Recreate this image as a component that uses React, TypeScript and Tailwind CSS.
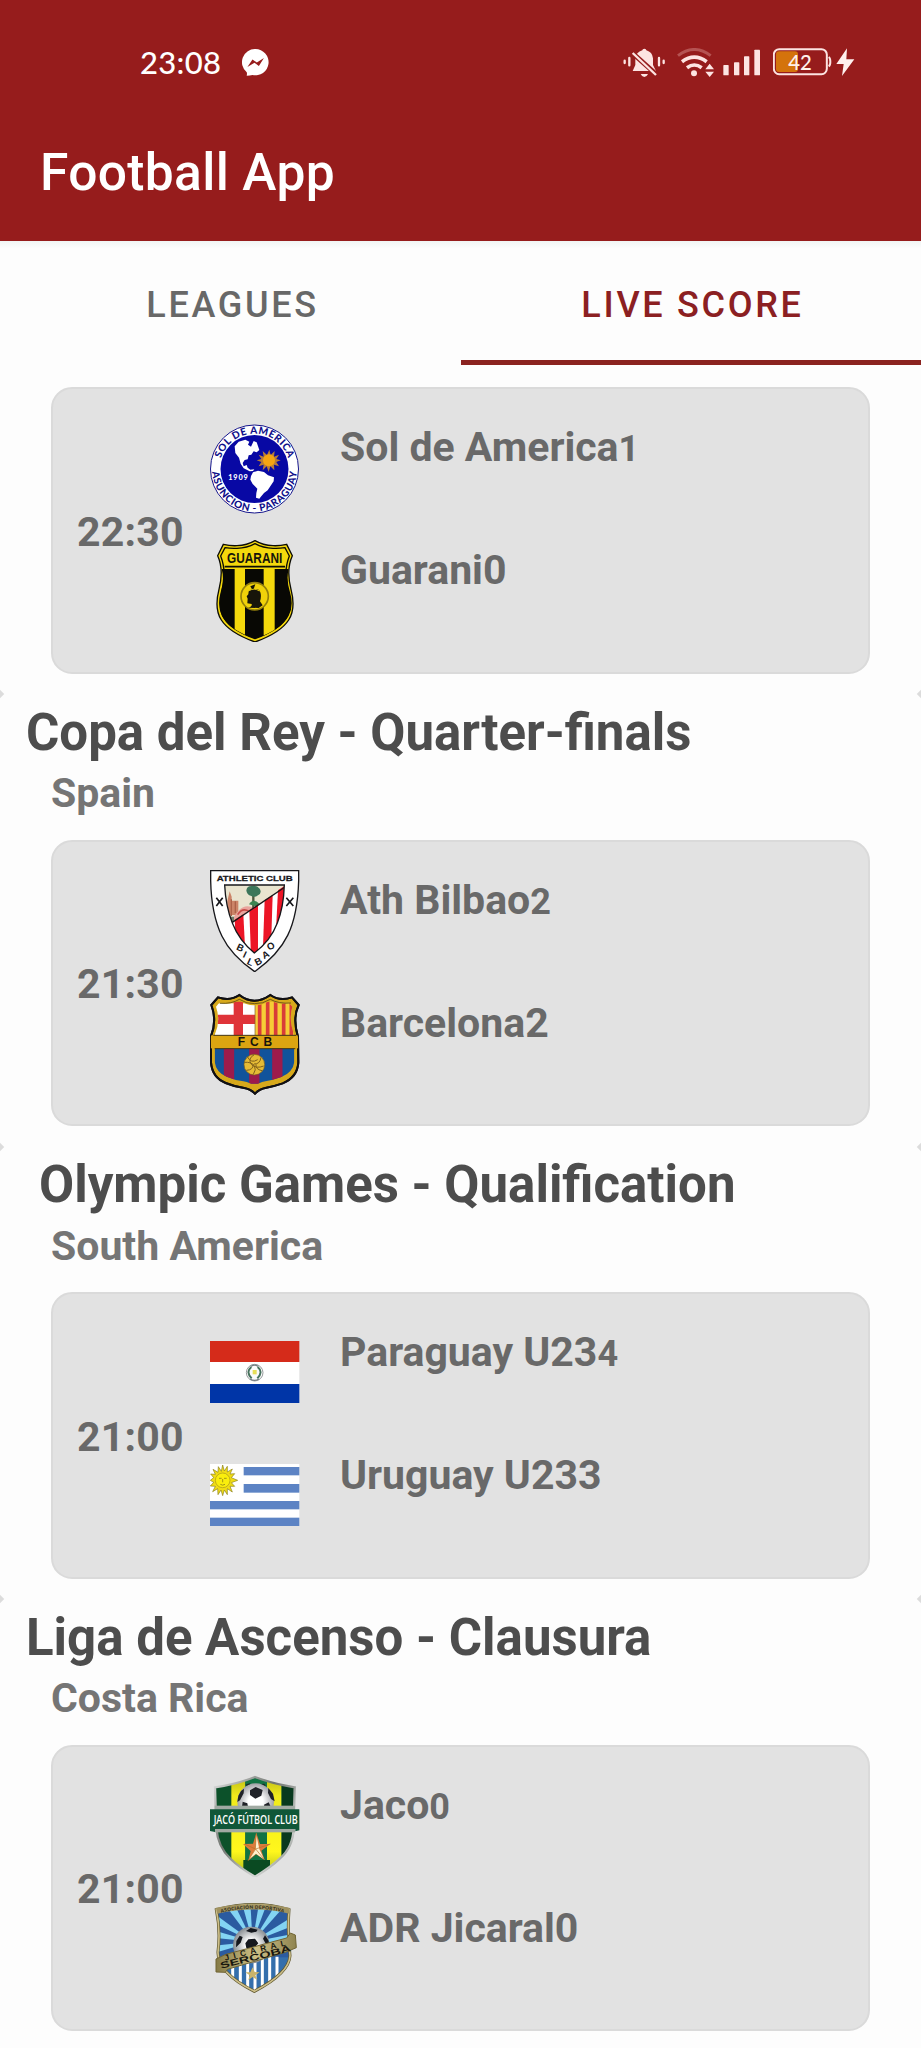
import type { ReactNode } from "react";

/* ---------- status bar icons ---------- */

function MessengerIcon() {
  return (
    <svg className="h-[27px] w-[27px]" viewBox="728 147 80 80">
      <path d="M768 147a39 39 0 1 1-9 77c-5 1-11 2-17 2 1-4 1-7 0-10a39 39 0 0 1 26-69z" fill="#fff" />
      <path d="M744 200l15-22 13 9 21-13-15 23-13-9z" fill="#961c1c" />
    </svg>
  );
}

function MutedBellIcon() {
  return (
    <svg className="h-[29px] w-[43px]" viewBox="68 49 129 87" fill="#fde4e2">
      <path d="M126 56q0-5 6-5t6 5q18 5 20 24v20l9 18H97l8-18V80q2-18 21-24z" />
      <path d="M121 127h22q-4 9-11 9t-11-9z" />
      <path d="M94 62l76 68" stroke="#961c1c" strokeWidth="15" />
      <path d="M97 64l70 66" stroke="#fde4e2" strokeWidth="7" />
      <path d="M73 87v7M87 79v22M176 79v22M190 87v7" stroke="#fde4e2" strokeWidth="7" strokeLinecap="round" />
    </svg>
  );
}

function WifiIcon() {
  return (
    <svg className="h-[29px] w-[38px]" viewBox="230 50 114 87" fill="none">
      <path d="M233 73q49-37 98 0" stroke="#b55352" strokeWidth="9" />
      <path d="M245 91q37-27 74 0" stroke="#fde4e2" strokeWidth="11" />
      <path d="M260 109q22-16 44 0" stroke="#fde4e2" strokeWidth="11" />
      <circle cx="281" cy="126" r="9" fill="#fde4e2" />
      <path d="M315 114l13-17 13 17zM315 121h26l-13 16z" fill="#fde4e2" />
    </svg>
  );
}

function SignalIcon() {
  return (
    <svg className="h-[27px] w-[37px]" viewBox="369 54 111 81" fill="#fde4e2">
      <rect x="370" y="102" width="16" height="31" rx="2" />
      <rect x="402" y="94" width="16" height="39" rx="2" />
      <rect x="432" y="76" width="16" height="57" rx="2" />
      <rect x="463" y="56" width="17" height="77" rx="2" />
    </svg>
  );
}

function BatteryIcon() {
  return (
    <svg className="h-[28px] w-[59px]" viewBox="519 54 177 84">
      <rect x="528" y="64" width="66" height="62" rx="9" fill="#d4730c" />
      <rect x="521.500" y="57.500" width="159" height="75" rx="16" fill="none" stroke="#fde4e2" strokeWidth="6" />
      <path d="M686 81q5 3 5 14t-5 14" fill="none" stroke="#fde4e2" strokeWidth="6" />
      <text x="600" y="119" textAnchor="middle" fontFamily="Lato, sans-serif" fontSize="61" fontWeight="500" fill="#fff0ec">
        42
      </text>
    </svg>
  );
}

function BoltIcon() {
  return (
    <svg className="h-[28px] w-[19px]" viewBox="708 52 57 84">
      <path d="M741 53l-32 47h22l-5 36 37-50h-24z" fill="#fff0ee" />
    </svg>
  );
}

/* ---------- club crests and flags ---------- */

const crest = "block h-[102px] w-[90px] shrink-0";

function SolDeAmerica() {
  return (
    <svg className={crest} viewBox="60 24 270 306">
      <defs>
        <path id="sol-top" d="M87.500 180A106 106 0 0 1 299.500 180" />
        <path id="sol-bottom" d="M66 180A127.500 127.500 0 0 0 321 180" />
      </defs>
      <circle cx="193.500" cy="180" r="132" fill="#fff" stroke="#15158c" strokeWidth="3" />
      <circle cx="193.500" cy="180" r="102" fill="#0808a4" />
      <g fontFamily="Lato, sans-serif" fontWeight="900" fill="#10108a" fontSize="30" textAnchor="middle">
        <text textLength="268" lengthAdjust="spacing">
          <textPath href="#sol-top" startOffset="50%">SOL DE AMERICA</textPath>
        </text>
        <text textLength="384" lengthAdjust="spacing">
          <textPath href="#sol-bottom" startOffset="50%">ASUNCION - PARAGUAY</textPath>
        </text>
      </g>
      <path
        d="M134 112l12-14 20-6 12 6-4 9 9 6 8-17 9 4 8 23-8 7-9-3-7 10-8 2-3 12-9 2-6 9 3 10 9-4 3 8 8 6 12-1-4 5-10 1-18-9-9-14-5-18-11-14z"
        fill="#fff"
      />
      <path d="M189 190l15-5 18 4 12 10 18 6-1 12-9 13-9 14-11 8-10 12-4 5-10-3 1-14 3-13-14-14-7-13 2-11z" fill="#fff" />
      <path
        d="M238 122l4 16 12-12-2 17 15-6-8 13 13 4-13 5 8 13-15-5 1 17-12-12-5 17-6-17-12 12 3-17-15 5 8-13-14-5 14-4-8-13 15 6-3-17 13 12z"
        fill="#b87c38"
      />
      <circle cx="237" cy="154" r="18" fill="#f6a412" />
      <text x="144" y="214" textAnchor="middle" textLength="58" fontFamily="Lato, sans-serif" fontWeight="900" fontSize="22" fill="#fff">
        1909
      </text>
    </svg>
  );
}

function Guarani() {
  return (
    <svg className={crest} viewBox="60 393 270 306">
      <defs>
        <clipPath id="guarani-body">
          <path d="M95 480H296q-8 32 4 70 12 40-4 70-22 42-101 69-77-27-99-69-15-30-4-70 12-38 3-70z" />
        </clipPath>
      </defs>
      <path
        d="M195 395q24 14 54 15 20 1 41-4l17 34q-19 42-4 101 15 58-7 92-24 38-101 66-77-28-101-66-22-34-7-92 15-59-4-101l17-34q21 5 41 4 30-1 54-15z"
        fill="#f4d80c" stroke="#0c0c05" strokeWidth="4"
      />
      <path
        d="M195 404q24 13 54 14 18 1 36-2l13 25q-18 46-5 100 15 57-6 88-22 35-92 60-70-25-92-60-21-31-6-88 13-54-5-100l13-25q18 3 36 2 30-1 54-14z"
        fill="#f4d80c" stroke="#0c0c05" strokeWidth="4"
      />
      <g clipPath="url(#guarani-body)">
        <rect x="80" y="478" width="230" height="220" fill="#080804" />
        <rect x="134" y="478" width="31" height="220" fill="#f4d80c" />
        <rect x="221" y="478" width="33" height="220" fill="#f4d80c" />
      </g>
      <path d="M104 473H285" stroke="#0c0c05" strokeWidth="5" />
      <circle cx="194" cy="562" r="41" fill="#f0d20a" stroke="#94800c" strokeWidth="5" />
      <path d="M174 596q13-3 11-11l-13-2 1-14-3-7 5-6 1-9 10-6-5-9 15-6-5 14q17-2 20 10 4 12-1 27l8 12-12 8z" fill="#17150a" />
      <path d="M175 546q18-11 33 0" stroke="#d7be11" strokeWidth="3" fill="none" />
      <text x="194" y="462" textAnchor="middle" textLength="166" lengthAdjust="spacingAndGlyphs" fontFamily="Liberation Sans, sans-serif" fontWeight="700" fontSize="43" fill="#17150a">
        GUARANI
      </text>
    </svg>
  );
}

function AthleticClub() {
  return (
    <svg className={crest} viewBox="60 30 270 306">
      <defs>
        <clipPath id="athletic-shield">
          <path d="M104 75H283q-2 66-21 114-20 53-69 90-46-38-66-90-20-50-23-114z" />
        </clipPath>
      </defs>
      <path d="M62 32H326v30q-3 103-33 164-28 58-99 109-70-48-98-106Q64 162 62 62z" fill="#fff" stroke="#17171b" strokeWidth="4" />
      <g clipPath="url(#athletic-shield)">
        <rect x="100" y="70" width="190" height="215" fill="#e9e4cf" />
        <path d="M112 165v-42l7-29 6 16v12h20v43z" fill="#cc8468" />
        <path d="M124 118v50M136 124v35" stroke="#ac6149" strokeWidth="4" />
        <path d="M124 186q30-66 70-40v30l-70 40z" fill="#e9a59d" />
        <path d="M143 164q14-22 34-10" fill="none" stroke="#c94c48" strokeWidth="5" />
        <path d="M108 170h24v20h-24z" fill="#6d7a68" />
        <path d="M190 107v38" stroke="#50583e" strokeWidth="7" />
        <path d="M169 91q2-14 17-13 14-4 23 8 8 13-5 20-10 8-20 2-14-3-15-17z" fill="#3d765a" />
        <path d="M177 133q12-20 31-2l-8 8z" fill="#3c8451" />
        <path d="M108 200L294 75V290H108z" fill="#fff" />
        <g fill="#ec1526">
          <path d="M134 179L160 163L166 280H140z" />
          <path d="M178 150L204 134V290H183z" />
          <path d="M224 120L248 105L243 260H219z" />
          <path d="M264 91L295 70V230H257z" />
        </g>
        <path d="M108 200L294 75" stroke="#171719" strokeWidth="4" />
      </g>
      <path d="M104 75H283q-2 66-21 114-20 53-69 90-46-38-66-90-20-50-23-114z" fill="none" stroke="#17171b" strokeWidth="4" />
      <path d="M79 113l19 25M98 113l-19 25M289 113l21 25M310 113l-21 25" stroke="#17171b" strokeWidth="5" />
      <g fontFamily="Liberation Sans, sans-serif" fill="#17171b">
        <text x="194" y="62" textAnchor="middle" textLength="228" lengthAdjust="spacingAndGlyphs" fontSize="24" stroke="#17171b" strokeWidth=".8">
          ATHLETIC CLUB
        </text>
        <text
          x="137 157 169 200 222 237"
          y="268 291 311 318 298 272"
          rotate="25 25 25 -28 -28 -28"
          fontWeight="700"
          fontSize="29"
        >
          BILBAO
        </text>
      </g>
    </svg>
  );
}

function Barcelona() {
  const outline =
    "M148 405q22 17 45 17 24 0 48-17 29 20 65 7l20 23q-19 40-2 96l1 77q-3 44-47 62-26 9-49 13-22 4-34 18-12-14-36-18-28-4-52-14-40-16-44-61l-1-77q20-48 2-96l20-23q37 12 64-7z";
  return (
    <svg className={crest} viewBox="60 399 270 306">
      <defs>
        <clipPath id="barca-outline"><path d={outline} /></clipPath>
        <clipPath id="barca-inner">
          <path d="M148 421q22 16 46 15 24 1 47-15 25 15 56 8l10 11q-12 40 6 85v80q-4 32-39 46-25 9-48 13-21 4-32 15-12-11-34-15-27-4-50-14-32-13-36-45v-80q19-42 4-85l9-11q34 7 61-8z" />
        </clipPath>
      </defs>
      <path d={outline} fill="#d7a91b" stroke="#101014" strokeWidth="6" />
      <g clipPath="url(#barca-inner)">
        <rect x="60" y="430" width="136" height="97" fill="#fff" />
        <path d="M145 425v105M80 478H196" stroke="#df3439" strokeWidth="28" />
        <rect x="196" y="425" width="130" height="102" fill="#f6cc36" />
        <path d="M209 425v105M233 425v105M257 425v105M281 425v105M304 425v105" stroke="#d83c38" strokeWidth="11" />
        <rect x="60" y="565" width="270" height="106" fill="#11539b" />
        <path d="M117 565v106M193 565v106M262 565v106" stroke="#9d1b4b" strokeWidth="31" />
        <path d="M195 428V525" fill="none" stroke="#7e5b22" strokeWidth="2" />
      </g>
      <path d="M90 430q35 2 58-12 22 14 46 13 24 1 47-13 25 14 62 11" fill="none" stroke="#3c3013" strokeWidth="2" />
      <path d={outline} fill="none" stroke="#101014" strokeWidth="6" />
      <g clipPath="url(#barca-outline)">
        <rect x="60" y="526" width="270" height="39" fill="#dca511" />
        <path d="M70 526H318M74 566H316" stroke="#423617" strokeWidth="3" />
      </g>
      <text x="195" y="557" textAnchor="middle" textLength="103" fontFamily="Liberation Sans, sans-serif" fontWeight="700" fontSize="36" fill="#17130c">
        FCB
      </text>
      <circle cx="193" cy="614" r="31" fill="#e5bb35" stroke="#795d1d" strokeWidth="2" />
      <path
        d="M193 584q-22 12-8 30 14 13 36 4M163 607q20-2 30 10 7 12-3 26M172 590q11 22 31 9M213 592q-3 21-21 20M169 631q22-1 20-18M216 632q-20-4-18-19"
        fill="none" stroke="#80601b" strokeWidth="3"
      />
    </svg>
  );
}

function ParaguayFlag() {
  return (
    <svg className={crest} viewBox="60 36 270 306">
      <rect x="60" y="93" width="268" height="63" fill="#d52b1a" />
      <rect x="60" y="156" width="268" height="66" fill="#fff" />
      <rect x="60" y="222" width="268" height="57" fill="#0035a7" />
      <circle cx="194" cy="188" r="25" fill="#fafafa" stroke="#95999b" strokeWidth="3" />
      <path d="M184 171q-18 15 1 34M203 171q18 15-1 34" fill="none" stroke="#45715c" strokeWidth="6" />
      <path d="M188 180h12v13h-12z" fill="#e7df57" />
      <path d="M180 207q14 8 27 0M183 169q11-7 21 0" stroke="#727c81" fill="none" strokeWidth="4" />
    </svg>
  );
}

function UruguayFlag() {
  return (
    <svg className={crest} viewBox="60 405 270 306">
      <rect x="60" y="462" width="268" height="186" fill="#fff" />
      <g fill="#5c83c4">
        <rect x="161" y="471" width="167" height="25" />
        <rect x="161" y="522" width="167" height="26" />
        <rect x="60" y="573" width="268" height="25" />
        <rect x="60" y="623" width="268" height="25" />
      </g>
      <path
        d="M98 465l5 18 9-14 0 17 15-9-7 15 14-1-10 12 19 8-19 7 10 11-14 0 7 17-15-10 0 18-9-14-5 17-5-17-9 14-1-18-15 9 8-16-15-1 10-11-10-6 10-8-9-11 14 1-7-15 15 9 1-17 9 14z"
        fill="#f0dc15" stroke="#8b811c" strokeWidth="2"
      />
      <circle cx="98" cy="511" r="22" fill="#faee0d" stroke="#a8951d" strokeWidth="2" />
      <path d="M87 505h8M102 505h8M98 507v10M91 523q7 5 14 0" stroke="#8f861c" strokeWidth="2.500" fill="none" />
    </svg>
  );
}

function JacoFC() {
  const shield = "M195 51q54 21 119 31l-3 122q-2 58-41 91-27 26-75 55-48-28-73-53-39-37-43-93L75 82q65-9 120-31z";
  return (
    <svg className={crest} viewBox="60 45 270 306">
      <defs>
        <clipPath id="jaco-shield"><path d={shield} /></clipPath>
        <linearGradient id="jaco-rim" x1="0" y1="0" x2="1" y2="1">
          <stop offset="0" stopColor="#dedede" />
          <stop offset=".4" stopColor="#707570" />
          <stop offset=".75" stopColor="#d6d8d6" />
          <stop offset="1" stopColor="#3c443c" />
        </linearGradient>
        <radialGradient id="jaco-ball"><stop offset=".4" stopColor="#fff" /><stop offset="1" stopColor="#a0a1a6" /></radialGradient>
        <linearGradient id="jaco-yellow" x1="0" y1="0" x2="0" y2="1">
          <stop offset="0" stopColor="#b8b616" /><stop offset=".2" stopColor="#f0ea1c" /><stop offset=".75" stopColor="#fff71c" /><stop offset="1" stopColor="#a8b61e" />
        </linearGradient>
      </defs>
      <g clipPath="url(#jaco-shield)">
        <rect x="60" y="45" width="270" height="306" fill="#0c512a" />
        <rect x="124" y="45" width="42" height="306" fill="url(#jaco-yellow)" />
        <rect x="166" y="45" width="65" height="306" fill="#127344" />
        <rect x="231" y="45" width="43" height="306" fill="url(#jaco-yellow)" />
        <rect x="276" y="45" width="40" height="306" fill="#08391e" />
        <path d="M160 300H240V351H160z" fill="#0a4a22" />
      </g>
      <path d={shield} fill="none" stroke="url(#jaco-rim)" strokeWidth="7" />
      <circle cx="197" cy="125" r="55" fill="url(#jaco-ball)" />
      <path d="M180 91l17-10 21 9-4 17-18 9-16-11zM145 107l8-14 9-7-1 14-11 21-8 5zM235 84l14 17 5 23-11-7-9-18zM158 125l14 5 2 10h-18zM222 134l14-7 7 15h-20zM181 72l-12 5-3-3 13-4zM214 72l14 7-5-8z" fill="#202228" />
      <rect x="74" y="137" width="241" height="80" fill="#a1aaa3" />
      <path d="M60 148h268v63l-12 3V207H75v9l-15-3z" fill="#105738" />
      <text x="197" y="192" textAnchor="middle" textLength="252" lengthAdjust="spacingAndGlyphs" fontFamily="Open Sans, sans-serif" fontWeight="600" fontSize="40" fill="#fff">
        JACÓ FÚTBOL CLUB
      </text>
      <path d="M199 219l11 33 31 0-27 20 10 28-26-17-23 19 7-29-23-21 30-1z" fill="#dd7c3c" />
      <path d="M199 225l9 42 14 31-24-17-21 17 19-31z" fill="#fff2d0" />
      <path d="M199 219l-3 48-32-15M197 267l-23 35M197 267l27 33M197 267l44-15" fill="none" stroke="#b67025" strokeWidth="2" />
    </svg>
  );
}

function Jicaral() {
  const shield = "M79 449q117-31 218 0-5 67 3 138-2 52-107 107Q82 638 84 576q8-65-5-127z";
  return (
    <svg className={crest} viewBox="60 414 270 306">
      <defs>
        <clipPath id="jicaral-shield"><path d={shield} /></clipPath>
        <radialGradient id="jicaral-ball"><stop offset=".3" stopColor="#fff" /><stop offset="1" stopColor="#888d91" /></radialGradient>
        <linearGradient id="jicaral-band"><stop offset="0" stopColor="#857a45" /><stop offset=".5" stopColor="#cdbf85" /><stop offset="1" stopColor="#8f8450" /></linearGradient>
        <path id="jicaral-top" d="M93 458Q193 434 288 459" />
      </defs>
      <g clipPath="url(#jicaral-shield)">
        <rect x="70" y="430" width="240" height="270" fill="#2b5ba0" />
        <g fill="#83d4f3">
          <path d="M188 545L102 430H132z" />
          <path d="M188 545L156 430H181z" />
          <path d="M188 545L207 430H231z" />
          <path d="M188 545L259 430H291z" />
          <path d="M188 545L320 462V493z" />
          <path d="M188 545L320 520V550z" />
          <path d="M188 545L70 459V488z" />
          <path d="M188 545L70 511V533z" />
          <path d="M188 545L70 557V580z" />
        </g>
        <rect x="70" y="592" width="240" height="110" fill="#346fac" />
        <path d="M128 590v100M151 590v100M173 590v100M195 590v110M217 590v100M239 590v100M261 590v90" stroke="#fff" strokeWidth="9" />
      </g>
      <path d={shield} fill="none" stroke="#5f572d" strokeWidth="9" />
      <path d={shield} fill="none" stroke="#cdbf8a" strokeWidth="5" />
      <path d="M78 443q116-20 220 0v18q-102-25-216 0z" fill="#a09260" />
      <text fontFamily="Lato, sans-serif" fontSize="14" fontWeight="900" fill="#302d1b">
        <textPath href="#jicaral-top" textLength="190">ASOCIACIÓN DEPORTIVA</textPath>
      </text>
      <circle cx="184" cy="555" r="55" fill="url(#jicaral-ball)" />
      <path d="M168 513l14-9 21 5-4 6-15 3zM139 543l10-16 9 4-6 17-14 14zM166 550l9-12 20-2 10 14-12 14h-24zM225 526l10 15 4 15-13-7-7-13z" fill="#15181e" />
      <path d="M78 597L108 583L290 534L301 519L316 525L319 563L286 577L112 628L106 637L78 636z" fill="url(#jicaral-band)" stroke="#716535" strokeWidth="3" />
      <g fontFamily="Liberation Sans, sans-serif" fontWeight="700" fill="#18170f">
        <text x="106" y="602" fontSize="25" textLength="188" transform="rotate(-14 106 602)">JICARAL</text>
        <text x="93" y="626" fontSize="27" textLength="218" lengthAdjust="spacingAndGlyphs" transform="rotate(-14 93 626)">SERCOBA</text>
      </g>
      <path d="M188 622l6 14 15 1-13 9 6 14-14-9-13 9 4-14-13-9h15z" fill="#cab46a" />
    </svg>
  );
}

/* ---------- page data ---------- */

type Side = { name: string; score: string; logo: ReactNode };
type Match = { time: string; home: Side; away: Side };
type League = { title: string; country: string; indented?: boolean; match: Match };

const firstMatch: Match = {
  time: "22:30",
  home: { name: "Sol de America", score: "1", logo: <SolDeAmerica /> },
  away: { name: "Guarani", score: "0", logo: <Guarani /> },
};

const leagues: League[] = [
  {
    title: "Copa del Rey - Quarter-finals",
    country: "Spain",
    match: {
      time: "21:30",
      home: { name: "Ath Bilbao", score: "2", logo: <AthleticClub /> },
      away: { name: "Barcelona", score: "2", logo: <Barcelona /> },
    },
  },
  {
    title: "Olympic Games - Qualification",
    country: "South America",
    indented: true,
    match: {
      time: "21:00",
      home: { name: "Paraguay U23", score: "4", logo: <ParaguayFlag /> },
      away: { name: "Uruguay U23", score: "3", logo: <UruguayFlag /> },
    },
  },
  {
    title: "Liga de Ascenso - Clausura",
    country: "Costa Rica",
    match: {
      time: "21:00",
      home: { name: "Jaco", score: "0", logo: <JacoFC /> },
      away: { name: "ADR Jicaral", score: "0", logo: <Jicaral /> },
    },
  },
];

function MatchCard({ match }: { match: Match }) {
  return (
    <article className="mx-[51px] flex h-[286.500px] rounded-[21px] border-2 border-[#dadada] bg-[#e2e2e2] text-[41px] leading-[48px] font-bold text-[#696969]">
      <div className="flex w-[156.500px] items-center pt-[3px] pl-6 tracking-[0.2px]">{match.time}</div>
      <div className="flex flex-col gap-[21px] pt-[28px]">
        {match.home.logo}
        {match.away.logo}
      </div>
      <div className="flex flex-col gap-[73px] pt-[34px] pl-[40.500px]">
        <div className="flex items-baseline">
          <span>{match.home.name}</span>
          <span className="text-[36px]">{match.home.score}</span>
        </div>
        <div className="flex items-baseline">
          <span>{match.away.name}</span>
          <span>{match.away.score}</span>
        </div>
      </div>
    </article>
  );
}

function LeagueSection({ league }: { league: League }) {
  return (
    <section className="relative h-[452.500px]">
      <span className="absolute -top-[3px] -left-[3px] size-[6px] rotate-45 bg-[#dcdcdc]" />
      <span className="absolute -top-[3px] -right-[3px] size-[6px] rotate-45 bg-[#dcdcdc]" />
      <div className="h-[145.500px] pt-[8.500px]">
        <h2 className={`text-[51px] leading-[60px] font-bold text-[#4d4d4d] ${league.indented ? "pl-[39px]" : "pl-[26px]"}`}>
          {league.title}
        </h2>
        <p className="mt-[6.500px] pl-[51px] text-[41px] leading-[48px] font-bold text-[#757575]">{league.country}</p>
      </div>
      <MatchCard match={league.match} />
    </section>
  );
}

export default function App() {
  return (
    <div className="h-[2048px] w-[921px] overflow-hidden bg-[#fdfdfd] font-[Roboto,sans-serif]">
      <header className="h-[241px] bg-[#961c1c] text-white">
        <div className="flex h-[124px] items-center pr-[66px] pl-[140px]">
          <span className="font-[Lato,sans-serif] text-[31px] leading-none font-medium tracking-[0.3px]">23:08</span>
          <span className="ml-[21px]"><MessengerIcon /></span>
          <div className="ml-auto flex items-center">
            <MutedBellIcon />
            <span className="ml-[11px]"><WifiIcon /></span>
            <span className="ml-[8px]"><SignalIcon /></span>
            <span className="ml-[13px]"><BatteryIcon /></span>
            <span className="ml-[4px]"><BoltIcon /></span>
          </div>
        </div>
        <h1 className="pt-[19px] pl-[40px] text-[51.500px] leading-[60px] font-medium tracking-[0.35px]">Football App</h1>
      </header>
      <nav className="flex h-[123.500px] bg-gradient-to-b from-[#f1f5f4] from-0% to-[#fdfdfd] to-[6%] text-[36px] font-medium tracking-[2.700px]">
        <div className="flex flex-1 items-center justify-center pt-[4px] pl-[4px] text-[#686868]">LEAGUES</div>
        <div className="flex flex-1 items-center justify-center border-b-[5.500px] border-[#8b2320] pt-[9.500px] pl-[3px] text-[#8b2022]">
          LIVE SCORE
        </div>
      </nav>
      <main>
        <div className="h-[329.500px] pt-[22.500px]">
          <MatchCard match={firstMatch} />
        </div>
        {leagues.map((league) => (
          <LeagueSection key={league.title} league={league} />
        ))}
      </main>
    </div>
  );
}
